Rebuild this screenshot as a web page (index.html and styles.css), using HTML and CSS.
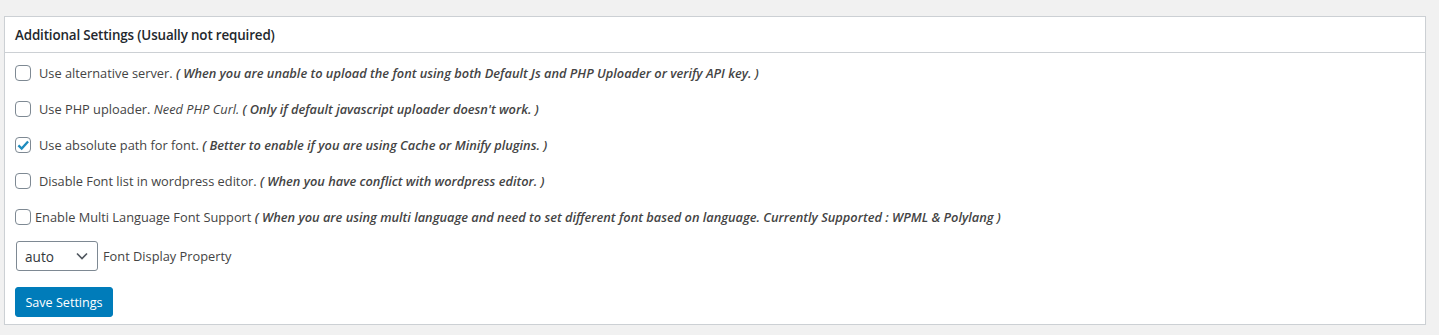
FILE: index.html
```html
<!DOCTYPE html>
<html lang="en">
<head>
  <meta charset="UTF-8" />
  <title>Additional Settings</title>
  <link rel="stylesheet" href="styles.css">
</head>
<body>
  <div class="postbox">
    <h2 class="hndle">Additional Settings (Usually not required)</h2>
    <div class="inside">
      <div class="row">
        <input type="checkbox" class="chk">
        <span>Use alternative server. <em>( When you are unable to upload the font using both Default Js and PHP Uploader or verify API key. )</em></span>
      </div>
      <div class="row">
        <input type="checkbox" class="chk">
        <span>Use PHP uploader. <i class="plain">Need PHP Curl.</i> <em>( Only if default javascript uploader doesn't work. )</em></span>
      </div>
      <div class="row">
        <input type="checkbox" class="chk" checked>
        <span>Use absolute path for font. <em>( Better to enable if you are using Cache or Minify plugins. )</em></span>
      </div>
      <div class="row">
        <input type="checkbox" class="chk">
        <span>Disable Font list in wordpress editor. <em>( When you have conflict with wordpress editor. )</em></span>
      </div>
      <div class="row tight">
        <input type="checkbox" class="chk">
        <span>Enable Multi Language Font Support <em>( When you are using multi language and need to set different font based on language. Currently Supported : WPML &amp; Polylang )</em></span>
      </div>
      <div class="select-row">
        <div class="select">
          <span>auto</span>
          <svg width="12" height="8" viewBox="0 0 12 8"><path d="M1 1.5 L6 6.5 L11 1.5" fill="none" stroke="#50575e" stroke-width="1.6"/></svg>
        </div>
        <span>Font Display Property</span>
      </div>
      <button class="button-primary">Save Settings</button>
    </div>
  </div>
</body>
</html>
```

FILE: styles.css
```css
body {
  margin: 0;
  padding: 16px 13px 0 4px;
  background: #f1f1f1;
  font-family: "Open Sans", "Noto Sans", sans-serif;
  font-size: 12.8px;
  color: #444;
}
.postbox {
  background: #fff;
  border: 1px solid #ccd0d4;
  box-shadow: 0 1px 1px rgba(0,0,0,0.04);
  height: 309px;
  box-sizing: border-box;
}
.hndle {
  margin: 0;
  height: 36px;
  box-sizing: border-box;
  border-bottom: 1px solid #ccd0d4;
  padding: 0 10px;
  display: flex;
  align-items: center;
  font-size: 13.4px;
  font-weight: 600;
  letter-spacing: -0.15px;
  color: #23282d;
}
.inside {
  padding: 2px 10px 0;
}
.row {
  height: 36px;
  display: flex;
  align-items: center;
}
.row em {
  font-weight: 600;
  font-style: italic;
}
.row .plain {
  font-style: italic;
}
.chk {
  appearance: none;
  width: 16px;
  height: 16px;
  margin: 0 8px 0 0;
  border: 1px solid #7e8993;
  border-radius: 4px;
  background: #fff;
  box-sizing: border-box;
}
.chk:checked {
  background: #fff url("data:image/svg+xml;utf8,<svg xmlns='http://www.w3.org/2000/svg' viewBox='0 0 16 16'><path d='M3 8.2 L6.4 11.5 L13 4.2' fill='none' stroke='%231e8cbe' stroke-width='2.4'/></svg>") center / 15px no-repeat;
}
.tight .chk {
  margin-right: 4px;
}
.select-row {
  margin-top: 6px;
  display: flex;
  align-items: center;
}
.select {
  width: 82px;
  height: 30px;
  box-sizing: border-box;
  border: 1px solid #7e8993;
  border-radius: 3px;
  margin: 0 5px 0 1px;
  padding: 0 9px 0 8px;
  display: flex;
  align-items: center;
  justify-content: space-between;
  color: #32373c;
  font-size: 13.6px;
}
.button-primary {
  display: block;
  background: #007cba;
  border: 1px solid #007cba;
  color: #fff;
  border-radius: 3px;
  height: 30px;
  width: 98px;
  padding: 0;
  font-family: inherit;
  font-size: 12.6px;
  margin-top: 16px;
}
```
